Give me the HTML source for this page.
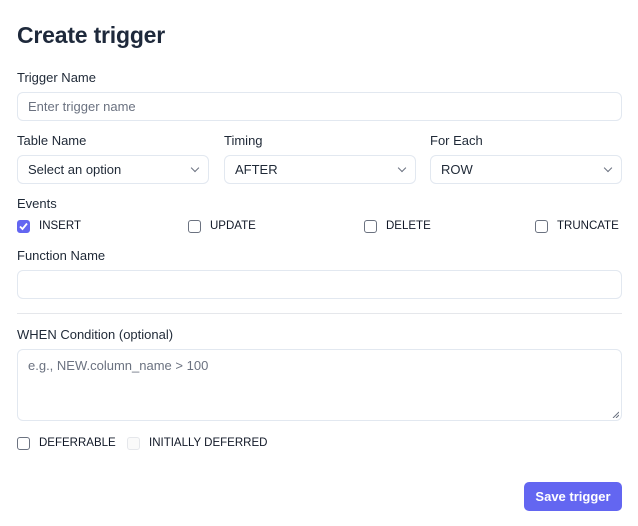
<!DOCTYPE html><html><head><style>
*{box-sizing:border-box;margin:0;padding:0}
body{width:638px;height:526px;background:#fff;font-family:"Liberation Sans",sans-serif;color:#1f2937;position:relative;overflow:hidden}
.a{position:absolute}
h1{position:absolute;left:17px;top:22px;font-size:23px;font-weight:bold;color:#1e293b;letter-spacing:-0.2px}
.l{position:absolute;font-size:13px;color:#1f2937}
.box{position:absolute;border:1px solid #e2e8f0;border-radius:6px;background:#fff;font-size:13px;padding-left:10px;display:flex;align-items:center}
.ph{color:#6b7280}
.chev{position:absolute;right:10px;top:9px;width:6px;height:6px;border-right:1.2px solid #6b7280;border-bottom:1.2px solid #6b7280;transform:rotate(45deg)}
.cb{position:absolute;width:13px;height:13px;border:1.3px solid #6b7280;border-radius:3px;background:#fff}
.ct{position:absolute;font-size:11.5px;color:#111827}
</style></head><body>
<h1>Create trigger</h1>
<div class="l" style="left:17px;top:70px">Trigger Name</div>
<div class="box" style="left:17px;top:92px;width:605px;height:29px"><span class="ph">Enter trigger name</span></div>
<div class="l" style="left:17px;top:133px">Table Name</div>
<div class="l" style="left:224px;top:133px">Timing</div>
<div class="l" style="left:430px;top:133px">For Each</div>
<div class="box" style="left:17px;top:155px;width:192px;height:29px">Select an option<div class="chev"></div></div>
<div class="box" style="left:224px;top:155px;width:192px;height:29px">AFTER<div class="chev"></div></div>
<div class="box" style="left:430px;top:155px;width:192px;height:29px">ROW<div class="chev"></div></div>
<div class="l" style="left:17px;top:196px">Events</div>
<div class="cb" style="left:17px;top:220px;background:#6366f1;border-color:#6366f1"><svg width="11" height="11" viewBox="0 0 11 11" style="position:absolute;left:0;top:0"><path d="M2 5.5L4.5 8L9 2.5" stroke="#fff" stroke-width="1.8" fill="none"/></svg></div>
<div class="ct" style="left:39px;top:220px">INSERT</div>
<div class="cb" style="left:188px;top:220px"></div><div class="ct" style="left:210px;top:220px">UPDATE</div>
<div class="cb" style="left:364px;top:220px"></div><div class="ct" style="left:386px;top:220px">DELETE</div>
<div class="cb" style="left:535px;top:220px"></div><div class="ct" style="left:557px;top:220px">TRUNCATE</div>
<div class="l" style="left:17px;top:248px">Function Name</div>
<div class="box" style="left:17px;top:270px;width:605px;height:29px"></div>
<div class="a" style="left:17px;top:313px;width:605px;height:1px;background:#e5e7eb"></div>
<div class="l" style="left:17px;top:327px">WHEN Condition (optional)</div>
<div class="box" style="left:17px;top:349px;width:605px;height:72px;align-items:flex-start;padding-top:8px"><span class="ph">e.g., NEW.column_name &gt; 100</span>
<svg class="a" style="right:2px;bottom:2px" width="7" height="7"><path d="M1 7L7 1M4 7L7 4" stroke="#6b7280" stroke-width="1"/></svg></div>
<div class="cb" style="left:17px;top:437px"></div><div class="ct" style="left:39px;top:437px">DEFERRABLE</div>
<div class="cb" style="left:127px;top:437px;border-color:#e5e7eb;background:#fafafa"></div><div class="ct" style="left:149px;top:437px">INITIALLY DEFERRED</div>
<div class="a" style="left:524px;top:482px;width:98px;height:29px;background:#6366f1;border-radius:5px;color:#fff;font-size:13px;font-weight:bold;display:flex;align-items:center;justify-content:center">Save trigger</div>
</body></html>
